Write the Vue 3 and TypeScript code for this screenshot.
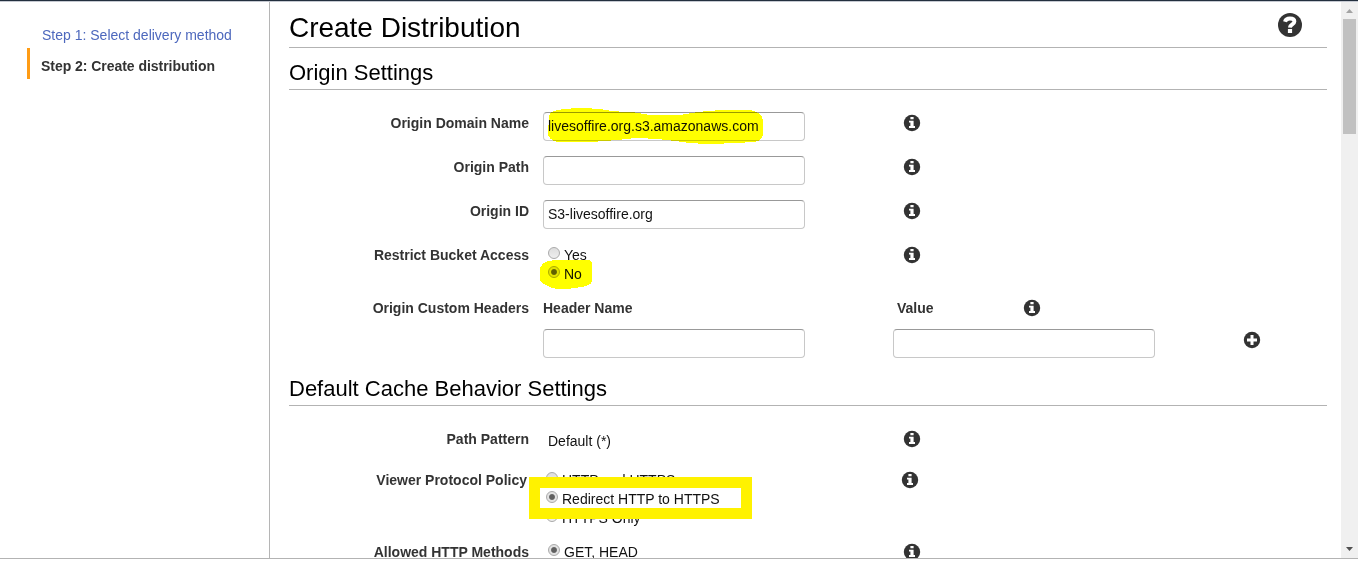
<script setup lang="ts">
interface Field { label: string; value: string }
const fields: Field[] = [
  { label: 'Origin Domain Name', value: 'livesoffire.org.s3.amazonaws.com' },
  { label: 'Origin Path', value: '' },
  { label: 'Origin ID', value: 'S3-livesoffire.org' },
]
const access = [
  { label: 'Yes', on: false },
  { label: 'No', on: true },
]
const policies = [
  { label: 'HTTP and HTTPS', on: false },
  { label: 'Redirect HTTP to HTTPS', on: true },
  { label: 'HTTPS Only', on: false },
]
</script>

<template>
  <svg class="defs" width="0" height="0">
    <symbol id="info" viewBox="0 0 16 16">
      <circle cx="8" cy="8" r="8.200" fill="#333" />
      <path d="M6.400 2h3.200v2.300H6.400zM5 5.700h4.600v5.400h1.400v2H5v-2h1.400V7.600H5z" fill="#fff" />
    </symbol>
    <symbol id="plus" viewBox="0 0 16 16">
      <circle cx="8" cy="8" r="8.200" fill="#333" />
      <path d="M6.500 3h3v3.500H13v3H9.500V13h-3V9.500H3v-3h3.500z" fill="#fff" />
    </symbol>
  </svg>
  <div class="page">
    <div class="frame">
      <nav class="side">
        <div class="step">Step 1: Select delivery method</div>
        <div class="step current">Step 2: Create distribution</div>
      </nav>
      <main class="main">
        <header class="title">
          <h1>Create Distribution</h1>
          <svg class="help" viewBox="0 0 24 24">
            <circle cx="12" cy="12" r="12" fill="#333" />
            <path d="M7 8.700C7.600 6.400 9.300 5.500 11.900 5.500c2.900 0 4.500 1.100 4.500 3.100 0 2.900-4.400 2.800-4.500 6" fill="none" stroke="#fff" stroke-width="3.900" />
            <path d="M9.900 16h4.200v4H9.900z" fill="#fff" />
          </svg>
        </header>
        <h2>Origin Settings</h2>
        <section class="origin">
          <div v-for="f in fields" :key="f.label" class="row">
            <div class="label">{{ f.label }}</div>
            <div class="box">{{ f.value }}</div>
            <svg class="icon"><use href="#info" /></svg>
          </div>
          <div class="row access">
            <div class="label">Restrict Bucket Access</div>
            <div class="choices">
              <div v-for="a in access" :key="a.label" class="choice"><i class="radio" :class="{ on: a.on }"></i>{{ a.label }}</div>
            </div>
            <svg class="icon"><use href="#info" /></svg>
          </div>
          <div class="row headers">
            <div class="label">Origin Custom Headers</div>
            <div class="col">
              <div class="head">Header Name</div>
              <div class="box"></div>
            </div>
            <div class="col value">
              <div class="head second"><span>Value</span><svg class="icon"><use href="#info" /></svg></div>
              <div class="box"></div>
            </div>
            <svg class="icon add"><use href="#plus" /></svg>
          </div>
        </section>
        <h2 class="cache">Default Cache Behavior Settings</h2>
        <section class="behavior">
          <div class="row path">
            <div class="label">Path Pattern</div>
            <div class="text">Default (*)</div>
            <svg class="icon"><use href="#info" /></svg>
          </div>
          <div class="row policy">
            <div class="label">Viewer Protocol Policy</div>
            <div class="choices">
              <div v-for="p in policies" :key="p.label" class="choice"><i class="radio" :class="{ on: p.on }"></i>{{ p.label }}</div>
            </div>
            <svg class="icon"><use href="#info" /></svg>
          </div>
          <div class="row">
            <div class="label">Allowed HTTP Methods</div>
            <div class="choices">
              <div class="choice"><i class="radio on"></i>GET, HEAD</div>
            </div>
            <svg class="icon"><use href="#info" /></svg>
          </div>
        </section>
      </main>
      <div class="scroll">
        <svg width="17" height="17"><path d="M5 11h7L8.500 7z" fill="#a3a3a3" /></svg>
        <div class="thumb"></div>
        <svg class="down" width="17" height="17"><path d="M5 6h7L8.500 10z" fill="#505050" /></svg>
      </div>
    </div>
    <svg class="marker" width="1358" height="567" shape-rendering="crispEdges">
      <path d="M549 116Q550 111 558 110Q575 107 600 109Q614 112 632 112L650 115Q665 116 680 115Q705 110 730 110H750Q758 111 762 117L763 121V132Q763 140 755 142Q735 143 714 144Q693 144 675 141Q655 138 635 138Q610 141 590 142H557Q549 140 548 134Z" fill="#ff0" />
      <path d="M542 265Q544 261 556 260H590L592 263V281Q591 286 581 287Q572 289 558 289Q550 288 544 284L540 281V267Z" fill="#ff0" />
    </svg>
    <div class="outline"></div>
    <div class="over"><i class="radio on"></i>Redirect HTTP to HTTPS</div>
  </div>
</template>

<style>
body { margin: 0; background: #fff; overflow: hidden; }
</style>

<style scoped>
.defs { position: absolute; }
.page { position: relative; width: 1358px; height: 567px; background: #fff; overflow: hidden; color: #111; font: 14px/19px "Liberation Sans", Arial, sans-serif; }
.frame { display: flex; box-sizing: border-box; height: 559px; border-top: 1px solid #232f3e; border-bottom: 1px solid #b3b3b3; box-shadow: inset 0 1px #c5c9d1; padding-top: 1px; overflow: hidden; }
.side { box-sizing: border-box; width: 270px; border-right: 1px solid #b5b5b5; padding-top: 15px; }
.step { height: 31px; line-height: 37px; padding-left: 42px; color: #4d68bd; white-space: nowrap; }
.current { box-sizing: border-box; margin-left: 27px; border-left: 3px solid #ff9c15; padding-left: 11px; font-weight: bold; color: #333; line-height: 36px; letter-spacing: -.04px; }
.main { width: 1038px; padding: 0 14px 0 19px; overflow: hidden; flex: none; }
.title { box-sizing: border-box; display: flex; justify-content: space-between; height: 46px; border-bottom: 1px solid #b3b3b3; padding-right: 25px; }
h1, h2 { margin: 0; font-weight: normal; color: #000; white-space: nowrap; }
h1 { font-size: 28px; line-height: 51px; letter-spacing: -.02px; }
h2 { box-sizing: border-box; height: 42px; border-bottom: 1px solid #b3b3b3; font-size: 22px; line-height: 49px; }
.help { width: 24px; height: 24px; margin-top: 11px; }
.origin { padding-top: 22px; height: 252px; }
.row { display: flex; height: 44px; }
.label { width: 240px; margin-right: 14px; text-align: right; font-weight: bold; color: #333; line-height: 22px; flex: none; white-space: nowrap; }
.box { box-sizing: border-box; width: 262px; height: 29px; border: 1px solid #c8c8c8; border-top-color: #999; border-radius: 4px; padding-left: 4px; line-height: 27px; flex: none; }
.icon { width: 16px; height: 16px; margin: 3px 0 0 99px; flex: none; overflow: visible; }
#info, #plus { overflow: visible; }
.choices { width: 262px; flex: none; }
.choice, .over { display: flex; align-items: flex-start; padding-left: 5px; height: 19px; line-height: 21px; white-space: nowrap; }
.access .choices { padding-top: 1px; }
.access { height: 53px; }
.radio { box-sizing: border-box; width: 12px; height: 12px; margin: 2px 4px 0 0; border: 1px solid #aaa; border-radius: 50%; background: linear-gradient(#ddd, #eee); flex: none; }
.radio.on { background: radial-gradient(circle, #606060 0 2.400px, #e2e2e2 3.500px); }
.headers { height: 61px; }
.head { height: 32px; line-height: 22px; font-weight: bold; color: #333; }
.value { margin-left: 88px; }
.second { display: flex; padding-left: 4px; }
.second span { width: 127px; }
.second .icon { margin-left: 0; }
.add { margin: 35px 0 0 89px; }
.cache { height: 42px; }
.behavior { padding-top: 22px; }
.path { height: 41px; }
.text { width: 257px; padding-left: 5px; line-height: 26px; }
.policy { height: 72px; transform: translateX(-2px); }
.policy .choices, .row:last-child .choices { padding-top: 1px; }
.scroll { width: 17px; background: #f0f0f0; flex: none; display: flex; flex-direction: column; }
.thumb { width: 13px; height: 115px; margin-left: 2px; background: #c1c1c1; flex: none; }
.down { margin-top: auto; }
.scroll svg { flex: none; }
.marker { position: absolute; left: 0; top: 0; mix-blend-mode: multiply; }
.outline { position: absolute; box-sizing: border-box; left: 529px; top: 477px; width: 223px; height: 42px; border: 11px solid #fff200; background: #fff; }
.over { position: absolute; left: 541px; top: 489px; }
</style>
